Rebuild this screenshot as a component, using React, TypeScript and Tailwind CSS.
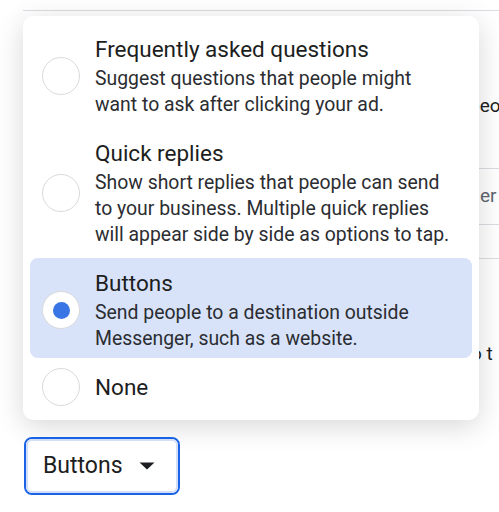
import React from "react";

type Opt = { title: string; desc?: string[]; selected?: boolean };

const options: Opt[] = [
  {
    title: "Frequently asked questions",
    desc: ["Suggest questions that people might", "want to ask after clicking your ad."],
  },
  {
    title: "Quick replies",
    desc: [
      "Show short replies that people can send",
      "to your business. Multiple quick replies",
      "will appear side by side as options to tap.",
    ],
  },
  {
    title: "Buttons",
    desc: ["Send people to a destination outside", "Messenger, such as a website."],
    selected: true,
  },
  { title: "None" },
];

function Radio({ selected }: { selected?: boolean }) {
  return (
    <div className="w-[38px] h-[38px] shrink-0 rounded-full border-[1.5px] border-[#dadada] bg-white flex items-center justify-center">
      {selected && <div className="w-[17px] h-[17px] rounded-full bg-[#3a75e5]" />}
    </div>
  );
}

export default function App() {
  return (
    <div
      className="relative w-[499px] h-[512px] overflow-hidden bg-white"
      style={{ fontFamily: "Roboto, 'Liberation Sans', sans-serif" }}
    >
      {/* background page */}
      <div className="ml-[23px] mt-[10px] border-t border-[#dadde1]" />
      <div className="ml-[380px] w-[119px] text-[19px] text-[#1c1e21]">
        <div className="mt-[82px] pl-[89px] leading-[26px] whitespace-nowrap">peo</div>
        <div className="mt-[49px] h-[57px] border-y border-[#dadde1] flex items-center pl-[100px] text-[#606770] whitespace-nowrap">
          er
        </div>
        <div className="mt-[33px] border-t border-[#dadde1]" />
        <div className="mt-[82px] pl-[91px] leading-[26px] whitespace-nowrap">o t</div>
      </div>

      {/* popup menu */}
      <div className="absolute left-[23px] top-[16px] w-[456px] rounded-[10px] bg-white shadow-[0_6px_28px_rgba(0,0,0,0.16)] px-[7px] pt-[8px] pb-[6px] flex flex-col gap-[4px]">
        {options.map((o) => (
          <div
            key={o.title}
            className={`flex items-center rounded-[8px] pl-[12px] ${
              o.desc ? "pt-[10px] pb-[6px]" : "pt-[6px] pb-[8px]"
            } ${o.selected ? "bg-[#d8e3fa]" : ""}`}
          >
            <Radio selected={o.selected} />
            <div className="ml-[15px] whitespace-nowrap">
              <div className="text-[22.5px] leading-[30px] text-[#1c1e21]">{o.title}</div>
              {o.desc && (
                <div className="pt-[2px] text-[19.4px] leading-[26px] text-[#2b2d31]">
                  {o.desc.map((d) => (
                    <div key={d}>{d}</div>
                  ))}
                </div>
              )}
            </div>
          </div>
        ))}
      </div>

      {/* dropdown button */}
      <div className="absolute left-[24px] top-[437px] w-[156px] h-[58px] rounded-[8px] border-2 border-[#1b63e6] bg-white">
        <div className="w-full h-full rounded-[6px] border-2 border-[#d3def7] flex items-center pl-[15px]">
          <span className="text-[23px] text-[#1c1e21]">Buttons</span>
          <svg className="ml-[16px]" width="16" height="8" viewBox="0 0 16 8">
            <path d="M0.5 0.5 L15.5 0.5 L8 7.5 Z" fill="#1c1e21" />
          </svg>
        </div>
      </div>
    </div>
  );
}
